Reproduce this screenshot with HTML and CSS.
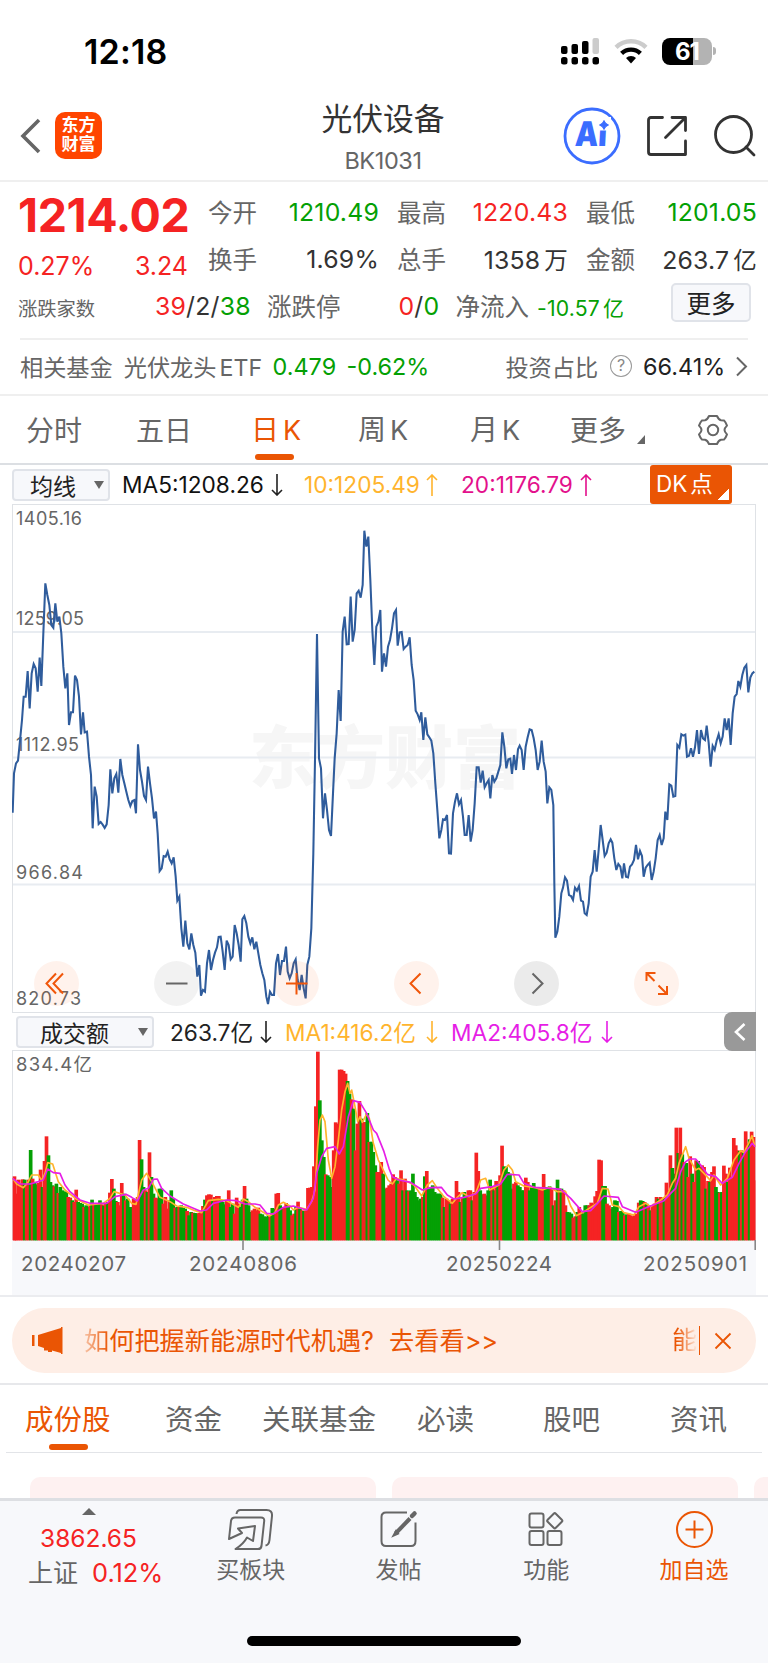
FILE: index.html
```html
<!DOCTYPE html>
<html lang="zh-CN">
<head>
  <meta charset="UTF-8">
  <meta name="viewport" content="width=device-width, initial-scale=1.0">
  <title>光伏设备 BK1031</title>
  <link rel="stylesheet" href="styles.css">
</head>
<body>
  <div class="status-bar">
    <span class="time">12:18</span>
    <svg class="signal" width="39" height="28" viewBox="0 0 39 28">
      <rect x="0" y="9" width="6.5" height="8" rx="2"/>
      <rect x="10.5" y="7" width="6.5" height="10" rx="2"/>
      <rect x="21" y="4" width="6.5" height="13" rx="2"/>
      <rect x="31.5" y="1" width="6.5" height="16" rx="2" fill="#ccc"/>
      <rect x="0" y="20" width="6.5" height="7.5" rx="2.5"/>
      <rect x="10.5" y="20" width="6.5" height="7.5" rx="2.5"/>
      <rect x="21" y="20" width="6.5" height="7.5" rx="2.5"/>
      <rect x="31.5" y="20" width="6.5" height="7.5" rx="2.5"/>
    </svg>
    <svg class="wifi" width="34" height="26" viewBox="0 0 34 26" fill="none" stroke-width="4.4">
      <path d="M2 9.3a21.500 21.500 0 0 1 30 0" stroke="#ccc"/>
      <path d="M7.600 15.400a13.600 13.600 0 0 1 18.800 0" stroke="#000"/>
      <path d="M17 25.500l-5-5.500a7 7 0 0 1 10 0z" fill="#000" stroke="none"/>
    </svg>
    <div class="battery"><span>61</span></div>
    <div class="battery-tip"></div>
  </div>

  <header class="header">
    <svg class="back" width="22" height="36" viewBox="0 0 22 36" fill="none" stroke="#666" stroke-width="3.600"><path d="M19 2L3 18l16 16"/></svg>
    <div class="logo">东方<br>财富</div>
    <div class="header-title">
      <h1>光伏设备</h1>
      <p>BK1031</p>
    </div>
    <svg class="ai" width="58" height="58" viewBox="0 0 58 58">
      <circle cx="29" cy="29" r="27" fill="#fff" stroke="#3b6dff" stroke-width="2.800"/>
      <text x="11.500" y="39.500" transform="skewX(-3) translate(2 0)" textLength="32" lengthAdjust="spacingAndGlyphs">Ai</text>
      <path d="M34 10h14v13.500h-14z" fill="#fff"/>
      <path d="M41 13.500q1 3.300 4.500 4.500q-3.500 1.200-4.500 4.500q-1-3.300-4.500-4.500q3.500-1.200 4.500-4.500z" fill="#3b6dff" stroke="#3b6dff"/>
    </svg>
    <svg class="share" width="40" height="40" viewBox="0 0 40 40" fill="none" stroke="#333" stroke-width="2.800" stroke-linecap="round" stroke-linejoin="round">
      <path d="M15.500 1.500H4q-2.500 0-2.500 2.500v32q0 2.500 2.500 2.500h34.500V25M25 1.500h13.500V14.500M38 2L18.500 21.500"/>
    </svg>
    <svg class="search" width="42" height="42" viewBox="0 0 42 42" fill="none" stroke="#333" stroke-width="2.800" stroke-linecap="round"><circle cx="19.500" cy="19.500" r="18"/><path d="M32 32l8 8"/></svg>
  </header>

  <section class="quote">
    <div class="quote-top">
      <div class="quote-main">
        <div class="price">1214.02</div>
        <div class="change"><span>0.27%</span><span>3.24</span></div>
      </div>
      <div class="quote-grid">
        <div><label>今开</label><b class="down">1210.49</b></div>
        <div><label>最高</label><b class="up">1220.43</b></div>
        <div><label>最低</label><b class="down">1201.05</b></div>
        <div><label>换手</label><b>1.69%</b></div>
        <div><label>总手</label><b>1358<i>万</i></b></div>
        <div><label>金额</label><b>263.7<i>亿</i></b></div>
      </div>
    </div>
    <div class="quote-extra">
      <label class="small">涨跌家数</label>
      <b class="counts"><span class="up">39</span>/2/<span class="down">38</span></b>
      <label class="limit">涨跌停</label>
      <b class="limits"><span class="up">0</span>/<span class="down">0</span></b>
      <label class="flow">净流入</label>
      <b class="flow-value down">-10.57<i>亿</i></b>
      <button class="more">更多</button>
    </div>
  </section>

  <section class="fund">
    <span>相关基金</span>
    <span class="fund-name">光伏龙头<em>ETF</em></span>
    <span class="fund-price down">0.479</span>
    <span class="fund-change down">-0.62%</span>
    <span class="ratio">投资占比</span>
    <span class="help">?</span>
    <span class="ratio-value">66.41%</span>
    <svg width="12" height="21" viewBox="0 0 12 21" fill="none" stroke="#666" stroke-width="2"><path d="M1 1.500l9 9-9 9"/></svg>
  </section>

  <nav class="periods">
    <span class="p1">分时</span>
    <span class="p2">五日</span>
    <span class="p3 active">日<em>K</em></span>
    <span class="p4">周<em>K</em></span>
    <span class="p5">月<em>K</em></span>
    <span class="p6">更多</span>
    <svg class="corner" width="8" height="9" viewBox="0 0 8 9"><path d="M8 0v9H0z" fill="#666"/></svg>
    <svg class="gear" width="32" height="32" viewBox="0 0 32 32" fill="none" stroke="#666" stroke-width="2" stroke-linejoin="round">
      <path d="M12 2h8q1.500 3.600 4 4.200l3 .2q2 2.200 3 5.200-2.500 2.400-2.500 4.400t2.500 4.400q-1 3-3 5.200l-3 .2q-2.500.6-4 4.200h-8q-1.500-3.600-4-4.200l-3-.2q-2-2.200-3-5.200 2.500-2.400 2.500-4.400T2 11.600q1-3 3-5.200l3-.2Q10.500 5.600 12 2z"/>
      <circle cx="16" cy="16" r="5.200"/>
    </svg>
  </nav>

  <div class="ma-row">
    <div class="select select-ma">均线<i></i></div>
    <span class="ma5">MA5:1208.26</span>
    <svg class="arrow down-arrow" width="12" height="22" viewBox="0 0 12 22"><path d="M6 0v21M1 16l5 5 5-5"/></svg>
    <span class="ma10">10:1205.49</span>
    <svg class="arrow up-arrow yellow" width="12" height="22" viewBox="0 0 12 22"><path d="M6 22V1M1 6l5-5 5 5"/></svg>
    <span class="ma20">20:1176.79</span>
    <svg class="arrow up-arrow pink" width="12" height="22" viewBox="0 0 12 22"><path d="M6 22V1M1 6l5-5 5 5"/></svg>
    <div class="dk">DK<em>点</em></div>
  </div>

  <div class="chart">
    <div class="watermark">东方财富</div>
    <svg id="priceChart" width="745" height="509" viewBox="12 504 745 509">
      <path class="grid" d="M12 632h744M12 757.500h744M12 884.500h744"/>
      <path class="frame" d="M12.500 504v509M755.500 504v509M12 504.500h744M12 1012.500h744"/>
      <g class="labels">
        <text x="16" y="525" textLength="66">1405.16</text>
        <text x="16" y="625" textLength="68">1259.05</text>
        <text x="16" y="751" textLength="63">1112.95</text>
        <text x="16" y="878.500" textLength="67">966.84</text>
        <text x="16" y="1005" textLength="65">820.73</text>
      </g>
      <polyline id="priceLine" transform="translate(0 500) scale(.33333)"/>
    </svg>
    <div class="controls">
      <svg viewBox="0 0 45 45"><path d="M22 12.500L12.500 22.500 22 32.500M29 12.500L19.500 22.500 29 32.500"/></svg>
      <svg class="gray light" viewBox="0 0 45 45"><path d="M12 22.500h21.500"/></svg>
      <svg viewBox="0 0 45 45"><path d="M12 22.500h21.500M22.500 12v21.500"/></svg>
      <svg viewBox="0 0 45 45"><path d="M26.500 12.500l-10 10 10 10"/></svg>
      <svg class="gray" viewBox="0 0 45 45"><path d="M18.500 12.500l10 10-10 10"/></svg>
      <svg viewBox="0 0 45 45"><path d="M12.500 20v-8h9M12.500 12l8 8M33 25v8h-9M33 33l-8.500-8.500"/></svg>
    </div>
  </div>

  <div class="vol-row">
    <div class="select select-vol">成交额<i></i></div>
    <span class="vol">263.7亿</span>
    <svg class="arrow" width="12" height="22" viewBox="0 0 12 22"><path d="M6 0v21M1 16l5 5 5-5"/></svg>
    <span class="vma1">MA1:416.2亿</span>
    <svg class="arrow yellow" width="12" height="22" viewBox="0 0 12 22"><path d="M6 0v21M1 16l5 5 5-5"/></svg>
    <span class="vma2">MA2:405.8亿</span>
    <svg class="arrow magenta" width="12" height="22" viewBox="0 0 12 22"><path d="M6 0v21M1 16l5 5 5-5"/></svg>
    <div class="collapse"><svg width="12" height="18" viewBox="0 0 12 18" fill="none" stroke="#fff" stroke-width="2.600"><path d="M10.500 1L2 9l8.500 8"/></svg></div>
  </div>

  <div class="volume">
    <svg id="volumeChart" width="745" height="245" viewBox="12 1050 745 245">
      <rect x="12" y="1240" width="744" height="55" fill="#f7f8fb"/>
      <path class="frame" d="M12.500 1050v190M755.500 1050v190M12 1050.500h744"/>
      <g id="bars" transform="translate(0 960) scale(.33333)"></g>
      <g class="ma-lines" transform="translate(0 960) scale(.33333)">
        <polyline id="volMa1" stroke="#ffb42d"/>
        <polyline id="volMa2" stroke="#e61ee6"/>
      </g>
      <path class="ticks" d="M243 1240v10M499.500 1240v10M755.200 1240v10"/>
      <g class="labels">
        <text x="16" y="1070.500" textLength="76" class="max">834.4亿</text>
      </g>
      <g class="labels dates">
        <text x="21" y="1271" textLength="105">20240207</text>
        <text x="189" y="1271" textLength="108">20240806</text>
        <text x="446" y="1271" textLength="106">20250224</text>
        <text x="643" y="1271" textLength="104">20250901</text>
      </g>
    </svg>
  </div>

  <div class="notice-wrap">
    <div class="notice">
      <svg width="31" height="27" viewBox="0 0 31 27" fill="#ea5504"><path d="M0 8h2.500v11H0zM6 8L29 1V0h1.500v27H29v-1l-9-2.500V25h-4v-1.500h-4V21L6 19z"/></svg>
      <span class="notice-text"><span class="fade-in">如</span>何把握新能源时代机遇<span class="qmark">?</span><span class="go">去看看&gt;&gt;</span></span>
      <span class="notice-next">能</span>
      <svg width="18" height="18" viewBox="0 0 18 18" stroke="#ea5504" stroke-width="1.800"><path d="M1.500 1.500l15 15M16.500 1.500l-15 15"/></svg>
    </div>
  </div>

  <nav class="tabs">
    <span class="active">成份股</span>
    <span class="t2">资金</span>
    <span class="t3">关联基金</span>
    <span class="t4">必读</span>
    <span class="t5">股吧</span>
    <span class="t6">资讯</span>
  </nav>
  <div class="cards"><div></div><div></div><div class="last"></div></div>

  <footer class="bottom">
    <div class="index">
      <svg width="14" height="7" viewBox="0 0 14 7"><path d="M7 0l7 7H0z" fill="#666"/></svg>
      <div class="index-value">3862.65</div>
      <div class="index-name">上证<span>0.12%</span></div>
    </div>
    <div class="item">
      <svg width="46" height="42" viewBox="0 0 46 42" fill="none" stroke="#666" stroke-width="2" stroke-linejoin="round">
        <path d="M8.500 5q.5-4 4-4h26q6 0 5.500 6l-2.500 24q-.5 5-4 5.500"/>
        <path d="M1 30L3 12q.5-3.500 4-3.500h26q3.500 0 3.200 3.500l-2.700 25q-.4 3-3.500 3H7.500q8-5 11.500-11.500l6 3.500 2-15-17 2.500 4 4.500-13 6z"/>
      </svg>
      <span>买板块</span>
    </div>
    <div class="item">
      <svg width="46" height="42" viewBox="0 0 46 42" fill="none" stroke="#666" stroke-width="2">
        <path d="M31 3.500H10q-4.500 0-4.500 4.500v24q0 5 4.500 5h25q4.500 0 4.500-5V13.500"/>
        <path d="M34 9.500L19.500 24.500" stroke-width="4"/><path d="M20 22l-2.500 4.500 4.500-2z" fill="#666"/><path d="M36 7l2.500-2.500" stroke-width="4.500" stroke-linecap="round"/>
      </svg>
      <span>发帖</span>
    </div>
    <div class="item">
      <svg width="46" height="42" viewBox="0 0 46 42" fill="none" stroke="#666" stroke-width="2">
        <rect x="6.500" y="4.500" width="14" height="14" rx="2"/><rect x="6.500" y="22" width="14" height="14" rx="2"/><rect x="24.500" y="22" width="14" height="14" rx="2"/>
        <rect x="26" y="6" width="11.500" height="11.500" rx="1.500" transform="rotate(45 31.750 11.750)"/>
      </svg>
      <span>功能</span>
    </div>
    <div class="item add">
      <svg width="46" height="42" viewBox="0 0 46 42" fill="none" stroke="#ea5504" stroke-width="2">
        <circle cx="23.500" cy="20.500" r="17.500"/><path d="M14.500 20.500h18M23.500 11.500v18"/>
      </svg>
      <span>加自选</span>
    </div>
  </footer>
  <div class="home-bar"></div>

  <script src="chart.js"></script>
</body>
</html>
```
FILE: styles.css
```css
body {
  font-family: Inter, 'Noto Sans CJK SC', sans-serif;
  width: 768px;
  height: 1663px;
  margin: 0;
  background-color: #fff;
  color: #333;
  overflow: hidden;
  white-space: nowrap;
}

* {
  box-sizing: border-box;
}

svg {
  display: block;
  flex-shrink: 0;
}

em, i {
  font-style: normal;
}

b {
  font-weight: 400;
}

.up {
  color: #f52323;
}

.down {
  color: #04a004;
}

/* status bar */
.status-bar {
  display: flex;
  align-items: center;
  height: 102px;
  padding-left: 84px;
}

.time {
  width: 477px;
  font-size: 34px;
  font-weight: 600;
  color: #000;
  letter-spacing: 0.2px;
}

.wifi {
  margin-left: 14px;
}

.battery {
  width: 50px;
  height: 27px;
  margin-left: 14px;
  border-radius: 8px;
  background: linear-gradient(90deg, #000 31px, #b3b3b3 31px);
  color: #fff;
  font-size: 24px;
  font-weight: 700;
  line-height: 27px;
  text-align: center;
  letter-spacing: -1px;
}

.battery-tip {
  width: 3px;
  height: 8px;
  margin-left: 1px;
  border-radius: 0 4px 4px 0;
  background-color: #b3b3b3;
}

/* header */
.header {
  display: flex;
  align-items: center;
  height: 80px;
  padding: 0 0 11px 20px;
  border-bottom: 2px solid #efefef;
}

.logo {
  width: 47px;
  height: 47px;
  margin-left: 13px;
  border-radius: 10px;
  background-color: #ff4500;
  color: #fff;
  font-size: 17px;
  font-weight: 700;
  line-height: 19px;
  text-align: center;
  padding-top: 4px;
}

.header-title {
  width: 170px;
  margin-left: 196px;
  padding-top: 8px;
  text-align: center;
}

.header-title h1 {
  margin: 0;
  font-size: 30.8px;
  font-weight: 400;
  line-height: 42px;
}

.header-title p {
  margin: 0;
  color: #666;
  font-size: 23.5px;
  line-height: 41px;
  letter-spacing: -0.4px;
}

.ai {
  margin-left: 95px;
}

.ai text {
  font-size: 34px;
  font-weight: 900;
  fill: #3b6dff;
}

.share {
  margin-left: 26px;
}

.search {
  margin-left: 27px;
}

/* quote */
.quote {
  height: 158px;
  margin: 0 20px;
  padding-top: 6px;
  border-bottom: 2px solid #efefef;
}

.quote label {
  color: #666;
  font-size: 24.5px;
}

.quote-top {
  display: flex;
  height: 94px;
}

.quote-main {
  width: 170px;
  margin-left: -2px;
  color: #f52323;
}

.price {
  height: 54px;
  font-size: 46.5px;
  font-weight: 700;
  line-height: 54px;
  letter-spacing: -0.4px;
}

.change {
  display: flex;
  justify-content: space-between;
  font-size: 25px;
  line-height: 48px;
}

.quote-grid {
  display: grid;
  grid-template-columns: repeat(3, 169px);
  grid-auto-rows: 47px;
  column-gap: 20px;
  margin-left: 20px;
}

.quote-grid div {
  display: flex;
  align-items: center;
  justify-content: space-between;
}

.quote b {
  font-size: 24.8px;
  letter-spacing: 0.2px;
}

.quote-grid b {
  margin-right: -2px;
}

.quote b i {
  margin-left: 4px;
  font-size: 23.5px;
}

.quote-extra {
  display: flex;
  align-items: center;
  height: 47px;
}

.quote .small {
  width: 137px;
  margin-left: -2px;
  padding-top: 5px;
  font-size: 19.3px;
}

.counts {
  width: 112px;
}

.limits {
  width: 57px;
  margin-left: 58px;
}

.quote .flow-value {
  margin-left: 8px;
  padding-top: 3px;
  font-size: 21.2px;
}

.quote .flow-value i {
  margin-left: 3px;
  font-size: 21px;
}

.more {
  position: relative;
  top: -3px;
  width: 80px;
  height: 39px;
  margin: 0 -3px 0 auto;
  padding: 0;
  border: 2px solid #e0e3e9;
  border-radius: 5px;
  background-color: #f7f8fb;
  color: #222;
  font: 24.5px/34px 'Noto Sans CJK SC', sans-serif;
}

/* related fund */
.fund {
  display: flex;
  align-items: center;
  height: 56px;
  padding: 0 20px 2px;
  border-bottom: 2px solid #efefef;
  color: #666;
  font-size: 23.2px;
}

.fund-name {
  width: 140px;
  margin-left: 11px;
}

.fund-name em {
  margin-left: 3px;
}

.fund-price {
  width: 74px;
  margin-left: 9px;
}

.fund-change {
  width: 159px;
}

.fund .down, .ratio-value {
  font-size: 23.4px;
}

.help {
  width: 22px;
  height: 22px;
  margin-left: 12px;
  border: 1.5px solid #999;
  border-radius: 50%;
  color: #888;
  font-size: 16px;
  line-height: 19px;
  text-align: center;
}

.ratio-value {
  width: 93px;
  margin-left: 11px;
  color: #222;
}

/* period tabs */
.periods {
  display: flex;
  align-items: center;
  height: 69px;
  padding-top: 2px;
  border-bottom: 2px solid #dcdfe3;
  color: #666;
  font-size: 28px;
}

.periods span {
  position: relative;
  line-height: 40px;
}

.periods em {
  margin-left: 4px;
  font-size: 27px;
}

.p1 { width: 110px; margin-left: 26px; }
.p2 { width: 115px; }
.p3 { width: 107px; }
.p4 { width: 112px; }
.p5 { width: 100px; }
.p6 { width: 67px; }

.active {
  position: relative;
  color: #ea5504;
}

.active::after {
  content: '';
  position: absolute;
  left: 4px;
  bottom: -9px;
  width: 39px;
  height: 6px;
  border-radius: 3px;
  background-color: #ea5504;
}

.corner {
  margin-top: 18px;
}

.gear {
  margin: -2px 0 0 52px;
}

/* indicator rows */
.ma-row, .vol-row {
  display: flex;
  align-items: center;
  font-size: 22.7px;
}

.ma-row {
  height: 39px;
  padding-left: 12px;
}

.select {
  display: flex;
  align-items: center;
  justify-content: space-between;
  height: 32px;
  border: 2px solid #e0e3e9;
  border-radius: 4px;
  background-color: #f7f8fb;
  color: #222;
  font-size: 23px;
}

.select i {
  border: 5px solid transparent;
  border-top: 8px solid #666;
  border-bottom: 0;
}

.select-ma {
  width: 98px;
  padding: 0 4px 0 16px;
}

.select-vol {
  width: 138px;
  padding: 0 4px 0 22px;
}

.arrow {
  fill: none;
  stroke: #222;
  stroke-width: 1.6;
}

.ma5 {
  width: 144px;
  margin-left: 12px;
  color: #111;
}

.ma-row .down-arrow {
  margin-left: 5px;
}

.ma10 {
  width: 121px;
  margin-left: 21px;
  color: #ffb42d;
}

.ma20 {
  width: 118px;
  margin-left: 23px;
  color: #e3108c;
}

.up-arrow {
  margin-left: 1px;
}

.yellow { stroke: #ffb42d; }
.pink { stroke: #e3108c; }
.magenta { stroke: #e61ee6; }

.dk {
  width: 82px;
  height: 39px;
  margin-left: 58px;
  padding-left: 6px;
  border-radius: 3px;
  background: linear-gradient(135deg, transparent 50%, #fff 50%) 68px 24px / 11px 11px no-repeat #ea5504;
  color: #fff;
  font-size: 22.5px;
  line-height: 38px;
}

.dk em {
  margin-left: 3px;
}

.chart {
  position: relative;
  height: 509px;
  padding-left: 12px;
}

.chart > svg {
  position: relative;
}

.watermark {
  position: absolute;
  left: 249px;
  top: 204px;
  color: #f6f6f6;
  font-size: 68px;
  font-weight: 900;
  line-height: 100px;
}

.grid {
  stroke: #e8ecf1;
  stroke-width: 2;
}

.frame {
  stroke: #dfe2e6;
  fill: none;
}

.labels {
  fill: #666;
  font-size: 18px;
}

.labels .max {
  font-size: 18.5px;
}

.dates {
  font-size: 20.5px;
}

#priceLine {
  fill: none;
  stroke: #2f5c9c;
  stroke-width: 6.2;
  stroke-linejoin: miter;
}

.controls {
  position: absolute;
  left: 34px;
  bottom: 7px;
  display: flex;
  gap: 75px;
}

.controls svg {
  width: 45px;
  height: 45px;
  border-radius: 50%;
  background-color: rgba(255, 90, 10, .08);
  fill: none;
  stroke: #f0560a;
  stroke-width: 2;
}

.controls .gray {
  background-color: rgba(0, 0, 0, .08);
  stroke: #666;
}

.controls .light {
  background-color: rgba(0, 0, 0, .05);
}

.vol-row {
  height: 37px;
  padding-left: 16px;
}

.vol {
  width: 85px;
  margin-left: 16px;
  color: #222;
}

.vol-row .arrow {
  margin-left: 5px;
}

.vma1 {
  width: 136px;
  margin-left: 13px;
  color: #ffb42d;
}

.vma2 {
  width: 145px;
  margin-left: 13px;
  color: #e61ee6;
}

.collapse {
  display: flex;
  align-items: center;
  width: 32px;
  height: 39px;
  margin: 0 12px 0 auto;
  padding-left: 10px;
  border-radius: 8px 0 0 8px;
  background-color: #999;
  position: relative;
}

.volume {
  height: 245px;
  padding-left: 12px;
}

.ma-lines {
  fill: none;
  stroke-width: 5;
  stroke-linejoin: round;
}

.ticks {
  stroke: #888;
  stroke-width: 1.6;
}

/* notice */
.notice-wrap {
  height: 90px;
  padding: 11px 12px 0;
  border-top: 2px solid #ebecef;
  border-bottom: 2px solid #e7e8eb;
}

.notice {
  display: flex;
  align-items: center;
  height: 65px;
  padding-left: 20px;
  border-radius: 33px;
  background-color: #feeee6;
  color: #ea5504;
  font-size: 25.2px;
}

.notice-text {
  width: 588px;
  margin-left: 21px;
  padding-bottom: 4px;
}

.fade-in {
  background: linear-gradient(90deg, #f8c4a8, #ea5504);
  -webkit-background-clip: text;
  color: transparent;
}

.qmark {
  display: inline-block;
  width: 28px;
}

.notice-next {
  width: 28px;
  border-right: 1.5px solid #ea5504;
  line-height: 29px;
  background: linear-gradient(90deg, #ea5504 20%, #feeee6 95%);
  -webkit-background-clip: text;
  color: transparent;
}

.notice > svg:last-child {
  margin-left: 14px;
}

/* tabs */
.tabs {
  display: flex;
  align-items: center;
  height: 68px;
  margin: 0 6px;
  padding-top: 2px;
  border-bottom: 1px solid #e2e4e8;
  color: #666;
  font-size: 28.5px;
}

.tabs span {
  line-height: 40px;
}

.tabs .active {
  width: 140px;
  margin-left: 19px;
}

.tabs .active::after {
  left: 24px;
  bottom: -10px;
}

.t2 { width: 97px; }
.t3 { width: 155px; }
.t4 { width: 126px; }
.t5 { width: 127px; }

.cards {
  display: flex;
  gap: 16px;
  height: 45px;
  padding: 24px 0 0 30px;
}

.cards div {
  width: 346px;
  border-radius: 10px 10px 0 0;
  background-color: #fef1f1;
}

.cards .last {
  width: 14px;
  border-radius: 10px 0 0 0;
}

/* bottom bar */
.bottom {
  display: flex;
  height: 138px;
  border-top: 3px solid #dddfe3;
  background-color: #f7f8fb;
  color: #666;
}

.index {
  width: 177px;
  padding-top: 7px;
}

.index svg {
  margin-left: 82px;
}

.index-value {
  margin-left: 40px;
  color: #f52323;
  font-size: 24.5px;
  line-height: 46px;
}

.index-name {
  margin-left: 28px;
  font-size: 25px;
  line-height: 24px;
}

.index-name span {
  margin-left: 14px;
  color: #f52323;
  font-size: 25.4px;
}

.item {
  display: flex;
  flex-direction: column;
  align-items: center;
  width: 147.7px;
  padding-top: 8px;
  font-size: 23px;
  line-height: 38px;
}

.add {
  color: #ea5504;
}

.home-bar {
  height: 27px;
  background: #f7f8fb;
}

.home-bar::before {
  content: '';
  display: block;
  width: 274px;
  height: 10px;
  margin: 0 auto;
  border-radius: 5px;
  background-color: #000;
}
```
FILE: chart.js
```javascript
// x,y pairs, three units per pixel
var price = `38,938 42,820 48,790 54,782 60,722 66,660 71,590 77,590 83,513 89,625 95,520 101,492 107,505 113,575 119,473 124,558 130,400 136,250 142,285 148,315 154,375 160,383 166,310 172,365 178,350 184,400 190,500 196,565 202,520 207,675 213,637 219,637 225,527 231,540 237,590 243,703 249,637 254,697 261,695 267,770 273,825 278,985 284,860 290,890 296,972 302,966 308,974 314,984 320,973 326,915 331,808 337,880 343,835 349,822 355,878 361,777 367,825 373,850 379,875 385,900 391,918 397,903 403,900 408,940 414,733 420,810 426,845 432,888 438,900 444,800 450,850 456,895 462,955 468,935 473,1000 479,1113 485,1105 491,1068 497,1070 503,1055 509,1078 515,1090 521,1072 527,1130 532,1202 538,1190 544,1285 550,1340 556,1262 562,1330 568,1348 574,1300 580,1335 586,1358 592,1430 598,1395 603,1487 609,1470 615,1475 621,1390 627,1350 633,1410 639,1380 645,1358 651,1342 656,1311 662,1310 668,1355 674,1410 680,1322 686,1335 692,1378 698,1370 704,1275 710,1300 716,1335 722,1385 727,1258 733,1248 739,1270 745,1310 751,1330 757,1312 763,1348 769,1325 775,1360 781,1395 787,1420 793,1440 799,1490 804,1512 810,1475 816,1485 822,1485 828,1390 834,1362 840,1425 846,1383 852,1383 858,1340 863,1415 869,1435 875,1420 881,1390 887,1378 893,1440 899,1470 905,1425 911,1465 917,1495 922,1395 928,1370 934,1285 940,1060 945,780 951,402 957,775 963,805 969,955 975,880 981,930 987,990 993,1008 999,880 1004,775 1010,700 1016,570 1022,663 1028,395 1034,350 1040,433 1046,432 1052,290 1058,425 1064,390 1070,280 1076,272 1082,293 1088,255 1093,92 1099,140 1105,110 1111,240 1117,390 1123,495 1129,380 1135,365 1141,330 1146,515`;
var price2 = `0,460 6,500 12,440 18,420 24,385 30,340 36,330 41,437 47,397 53,396 59,447 65,440 71,435 77,412 83,495 89,540 95,632 101,643 107,660 112,637 118,720 124,652 130,703 136,712 142,722 148,760 154,850 160,930 166,1015 172,990 177,958 183,960 189,945 195,1060 201,1061 207,940 213,905 219,880 225,913 231,900 237,950 242,1005 248,1005 254,945 260,1025 266,990 272,910 278,802 284,802 290,848 296,812 302,862 308,850 314,840 319,895 325,825 331,845 337,835 343,815 349,795 355,697 361,740 367,805 373,778 379,776 384,822 390,765 396,810 402,748 407,737 413,750 419,810 425,740 431,712 437,688 443,690 449,715 455,750 461,810 467,785 473,722 479,785 485,815 490,910 496,862 502,870 508,915 511,1150 514,1313 520,1295 526,1250 532,1180 537,1163 543,1132 549,1142 555,1185 561,1188 567,1200 573,1163 579,1172 585,1158 591,1202 597,1205 602,1240 608,1245 614,1210 620,1130 626,1115 632,1050 638,1115 644,1050 650,975 656,1020 662,1068 668,1058 674,1030 680,1018 685,1028 691,1075 697,1110 703,1092 709,1100 715,1135 720,1090 726,1130 732,1132 738,1100 744,1093 750,1080 756,1035 762,1078 768,1053 774,1068 779,1130 785,1103 791,1095 797,1088 803,1140 809,1115 815,1075 821,1020 827,1005 833,1035 839,1015 844,935 850,960 856,853 862,857 868,890 874,888 880,735 886,743 892,703 898,707 904,704 909,770 915,767 921,745 927,770 933,742 939,690 945,762 951,690 957,715 963,720 968,677 974,728 980,800 986,738 992,750 998,722 1004,703 1010,730 1016,710 1022,655 1028,690 1034,655 1040,735 1046,640 1052,590 1058,582 1063,543 1069,560 1075,525 1081,503 1087,495 1093,577 1099,533 1105,520 1111,515`;

var ma1 = `38,655 50,672 70,683 85,665 95,645 115,645 125,662 135,640 143,608 158,612 175,665 195,690 230,718 265,735 310,730 330,715 342,695 375,705 395,730 408,733 425,660 440,640 455,665 480,712 510,725 530,738 560,742 585,752 605,758 625,722 655,718 680,722 715,742 730,717 745,725 765,742 790,757 808,768 825,758 835,735 850,727 870,738 880,750 895,742 920,748 935,725 945,690 953,560 960,480 967,465 975,485 985,600 995,655 1005,620 1015,540 1025,450 1035,395 1043,370 1050,400 1055,390 1065,440 1073,485 1080,470 1087,487 1100,462 1108,475 1120,550 1135,600`;
var ma1b = `0,635 12,660 25,672 38,655 60,660 90,675 113,708 130,675 145,662 160,685 180,710 205,730 220,712 235,698 255,710 275,700 290,660 305,655 317,690 345,675 360,630 373,615 385,630 395,665 420,678 450,682 475,690 497,682 520,695 545,695 560,738 577,767 600,755 640,730 655,685 672,687 685,735 705,740 720,758 750,765 765,740 785,730 800,740 830,720 850,705 865,670 875,655 885,610 905,560 915,595 935,630 945,625 960,640 980,662 990,645 1010,675 1030,655 1050,600 1070,572 1080,578 1095,548 1104,527 1113,560`;
var ma2 = `38,655 60,672 90,672 115,665 130,660 143,627 160,638 180,640 195,675 210,695 240,720 270,730 320,730 345,710 378,703 395,712 412,723 430,690 445,685 460,658 472,657 485,685 510,708 550,732 600,753 620,750 640,730 680,720 710,722 735,732 765,732 780,735 800,760 820,762 850,742 880,738 920,750 940,715 950,640 965,590 980,565 1005,560 1018,582 1030,560 1045,470 1060,422 1080,427 1100,460 1120,510 1130,520`;
var ma2b = `0,575 15,625 25,650 45,660 80,667 115,690 140,683 172,682 190,705 210,717 240,712 275,702 290,685 325,680 350,672 370,643 405,645 420,670 450,682 500,685 530,688 560,715 595,755 620,752 645,725 660,708 703,712 715,740 755,757 790,742 840,722 860,700 875,685 890,635 905,605 918,597 935,597 950,615 970,643 995,650 1015,670 1045,652 1065,610 1085,575 1105,550 1113,560`;

// bar heights, negative = falling day
var volumes = [
  192, 178, 140, 182, 170, 183, -182, 165, 182, -271,
  185, -175, -168, 172, 212, -160, 238, 312, -255, -175,
  -165, 162, -170, 142, -160, -150, -147, -145, 130, 128,
  -120, 115, 152, -115, -112, -110, 100, -105, -100, 105,
  -122, 108, -108, -110, -120, 108, -104, 112, -115, 143,
  184, -155, -118, 115, 105, 172, -140, 120, -125, -100,
  -100, 125, 120, 130, 301, -243, -160, 150, -145, 264,
  -190, -140, 128, 126, -155, -155, 110, 130, 95, 120,
  -150, -125, 98, -100, 100, -105, -98, -95, 88, -75,
  -85, 83, -82, -80, 82, 85, 103, -122, 135, 138,
  137, -122, 130, 133, 133, -120, -115, -108, 120, 150,
  -100, -110, 80, 128, 110, -100, -122, 163, -125, -105,
  -85, 90, 95, 90, 98, -80, -78, -72, -70, -75,
  75, -97, -95, 140, 142, -105, -100, 100, 112, -105,
  -90, 75, 80, -100, 116, -95, 90, -88, 90, 157,
  158, 160, 222, 402, 566, -420, -300, -250, 198, -195,
  -190, -160, 270, 354, 350, 512, 512, 508, 500, -478,
  -440, 423, -395, 270, 350, 418, -365, 355, 355, -382,
  295, -296, -265, -225, 205, 205, 235, -200, -155, 158,
  165, 170, 198, 190, -180, 170, 210, -150, 185, -150,
  147, -150, -200, -145, -130, -120, -125, 130, -192, 208,
  -155, -160, -165, -145, -140, -140, -140, 128, -100, 125,
  120, -110, 125, 115, 178, 145, -115, 130, -145, -130,
  150, 150, -120, 145, 263, 208, -150, -138, 140, 135,
  -150, -182, 160, -150, 178, -168, 195, 284, -222, -220,
  -205, -200, -155, 170, 175, -165, -160, -150, -150, 188,
  175, -150, -160, -172, -160, -155, 158, 155, 199, -160,
  -160, -162, 155, -105, 120, -182, 155, -155, 150, 105,
  -85, -84, -80, 68, 72, -85, 100, 85, -80, -105,
  -105, 105, 113, 110, 132, 148, 242, 240, -163, -163,
  110, 105, 95, -100, -120, -118, 85, -88, -85, 75,
  -78, 80, 75, 72, 75, 80, 113, -120, -118, 115,
  -110, 105, -90, 105, 110, 130, -125, 130, 125, -128,
  173, 150, 255, -217, -200, 338, -262, 338, -258, 235,
  -232, 190, 252, -200, 175, 240, -238, -220, 225, 220,
  -155, 178, -175, 205, 222, -160, -145, 143, -145, 224,
  200, -175, 218, 190, 307, 285, 270, -268, 270, -265,
  327, 290, -303, 326, 310, 180
];

function shift(points) {
  return points.split(' ').map(function (p) {
    var xy = p.split(',');
    return (Number(xy[0]) + 1152) + ',' + xy[1];
  }).join(' ');
}

function setPoints(id, first, second) {
  document.getElementById(id).setAttribute('points', first + ' ' + shift(second));
}

setPoints('priceLine', price, price2);
setPoints('volMa1', ma1, ma1b);
setPoints('volMa2', ma2, ma2b);

var bars = document.getElementById('bars');
volumes.forEach(function (v, i) {
  var h = Math.abs(v);
  var x = 33 + i * 5.93 + i * 0.012;
  var rect = document.createElementNS('http://www.w3.org/2000/svg', 'rect');
  rect.setAttribute('x', Math.max(38, x));
  rect.setAttribute('y', 841 - h);
  rect.setAttribute('width', Math.min(11, 2266 - x));
  rect.setAttribute('height', h);
  rect.setAttribute('fill', v > 0 ? '#f52323' : '#04a004');
  bars.appendChild(rect);
});
```
